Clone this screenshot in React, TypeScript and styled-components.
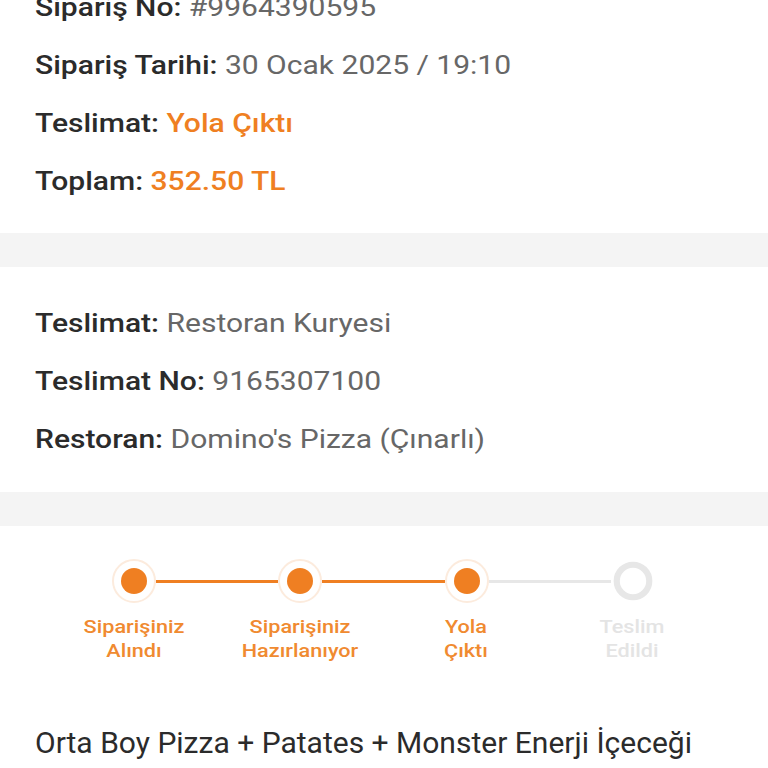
import React from 'react';
import styled, { createGlobalStyle } from 'styled-components';

const GlobalStyle = createGlobalStyle`
  html, body {
    margin: 0;
    padding: 0;
    background: #ffffff;
    font-family: Roboto, "Noto Sans", "Liberation Sans", sans-serif;
    overflow: hidden;
  }
`;

const ORANGE = '#ef7f22';

const Page = styled.div`
  width: 768px;
  height: 768px;
  overflow: hidden;
  background: #fff;
`;

const Section = styled.div<{ $top: number; $bottom: number; $shift?: number }>`
  padding: ${p => p.$top}px 35px ${p => p.$bottom}px;
  margin-top: ${p => p.$shift ?? 0}px;
`;

const Band = styled.div`
  height: 34px;
  background: #f4f4f4;
`;

// the screenshot is a bit stretched sideways, so the text is widened to match
const Line = styled.div`
  font-size: 26px;
  line-height: 58px;
  white-space: nowrap;
  color: #676767;
  transform: scaleX(1.155);
  transform-origin: left center;
`;

const Key = styled.span`
  color: #2b2b2b;
  font-weight: 500;
`;

const Accent = styled.span`
  color: ${ORANGE};
  font-weight: 500;
`;

const Stepper = styled.div`
  padding: 33px 0 0;
`;

const Track = styled.div`
  display: flex;
  align-items: center;
  margin-left: 112px;
  width: 543px;
`;

const Dot = styled.div<{ $done: boolean }>`
  box-sizing: border-box;
  width: 44px;
  height: 44px;
  border-radius: 50%;
  flex: none;
  display: flex;
  align-items: center;
  justify-content: center;
  border: ${p => (p.$done ? '2px solid #fcebdd' : '7px solid #e7e7e7')};
  background: #fff;
  transform: ${p => (p.$done ? 'none' : 'scale(0.88)')};

  &::after {
    content: '';
    display: ${p => (p.$done ? 'block' : 'none')};
    width: 26px;
    height: 26px;
    border-radius: 50%;
    background: ${ORANGE};
  }
`;

const Connector = styled.div<{ $done: boolean }>`
  flex: 1;
  height: 3px;
  background: ${p => (p.$done ? ORANGE : '#e7e7e7')};
`;

const Labels = styled.div`
  display: grid;
  grid-template-columns: repeat(4, 166px);
  margin-left: 51px;
  margin-top: 12px;
`;

const StepLabel = styled.div<{ $done: boolean }>`
  text-align: center;
  font-size: 19px;
  line-height: 24px;
  font-weight: 500;
  color: ${p => (p.$done ? '#f08a30' : '#e4e4e4')};
  transform: scaleX(1.14);
`;

const Title = styled.div`
  margin: 62px 0 0 35px;
  font-size: 29px;
  line-height: 36px;
  color: #2b2b2b;
  white-space: nowrap;
  transform: scaleX(1.035);
  transform-origin: left center;
`;

const steps = [
  ['Siparişiniz', 'Alındı'],
  ['Siparişiniz', 'Hazırlanıyor'],
  ['Yola', 'Çıktı'],
  ['Teslim', 'Edildi'],
];
const current = 2;

export default function App() {
  return (
    <Page>
      <GlobalStyle />
      <Section $top={0} $bottom={23} $shift={-22}>
        <Line><Key>Sipariş No:</Key> #9964390595</Line>
        <Line><Key>Sipariş Tarihi:</Key> 30 Ocak 2025 / 19:10</Line>
        <Line><Key>Teslimat:</Key> <Accent>Yola Çıktı</Accent></Line>
        <Line><Key>Toplam:</Key> <Accent>352.50 TL</Accent></Line>
      </Section>
      <Band />
      <Section $top={27} $bottom={24}>
        <Line><Key>Teslimat:</Key> Restoran Kuryesi</Line>
        <Line><Key>Teslimat No:</Key> 9165307100</Line>
        <Line><Key>Restoran:</Key> Domino's Pizza (Çınarlı)</Line>
      </Section>
      <Band />
      <Stepper>
        <Track>
          {steps.map((_, i) => (
            <React.Fragment key={i}>
              {i > 0 && <Connector $done={i <= current} />}
              <Dot $done={i <= current} />
            </React.Fragment>
          ))}
        </Track>
        <Labels>
          {steps.map((s, i) => (
            <StepLabel key={i} $done={i <= current}>
              {s[0]}<br />{s[1]}
            </StepLabel>
          ))}
        </Labels>
      </Stepper>
      <Title>Orta Boy Pizza + Patates + Monster Enerji İçeceği</Title>
    </Page>
  );
}
